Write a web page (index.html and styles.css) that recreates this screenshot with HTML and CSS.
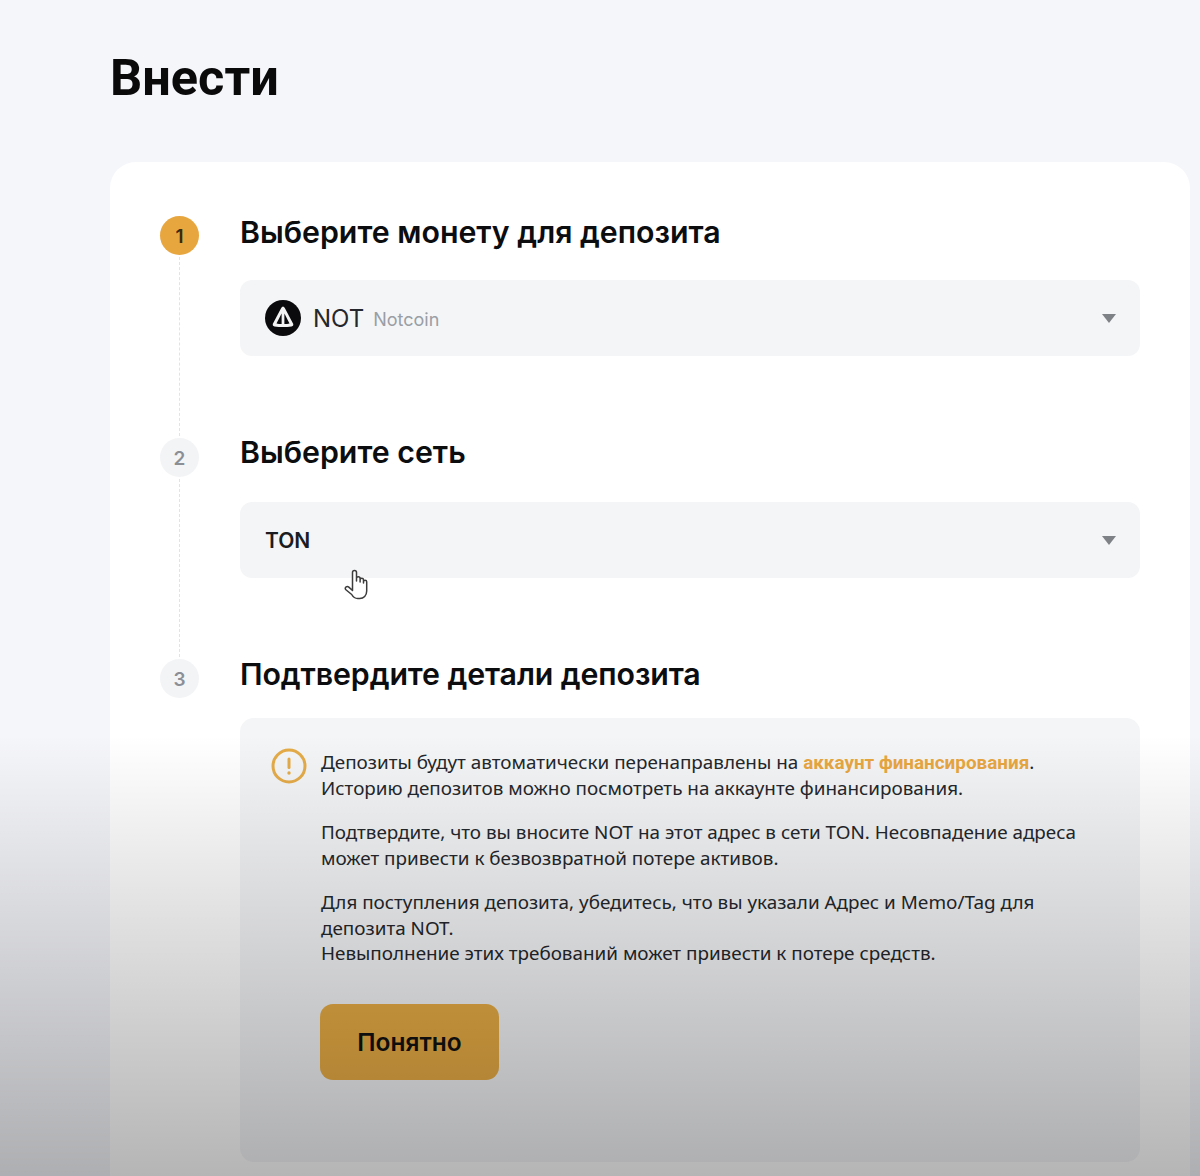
FILE: index.html
```html
<!DOCTYPE html>
<html lang="ru">
<head>
<meta charset="utf-8">
<title>Внести</title>
<link rel="stylesheet" href="styles.css">
</head>
<body>
<main class="page">
  <h1 class="title">Внести</h1>
  <section class="card">
    <div class="step">
      <div class="rail"><span class="num num-active">1</span><span class="dash"></span></div>
      <div class="step-body">
        <h2 class="step-title">Выберите монету для депозита</h2>
        <div class="select">
          <svg class="coin" viewBox="0 0 36 36" aria-hidden="true">
            <circle cx="18" cy="18" r="18" fill="#0b0b0d"/>
            <path d="M18 6.5 Q19 6.5 19.8 8 L28 23.5 Q29 26 26.5 26.4 Q18 27.6 9.5 26.4 Q7 26 8 23.5 L16.2 8 Q17 6.5 18 6.5 Z" fill="#f4f4f4"/>
            <path d="M16.6 13.5 L16.6 24 Q14 24 11.5 23.4 Z" fill="#0b0b0d"/>
            <path d="M19.4 13.5 L19.4 24 Q22 24 24.5 23.4 Z" fill="#0b0b0d"/>
          </svg>
          <span class="coin-code">NOT</span>
          <span class="coin-name">Notcoin</span>
          <span class="caret"></span>
        </div>
      </div>
    </div>
    <div class="step step-mid">
      <div class="rail"><span class="num">2</span><span class="dash"></span></div>
      <div class="step-body">
        <h2 class="step-title">Выберите сеть</h2>
        <div class="select">
          <span class="net">TON</span>
          <span class="caret"></span>
        </div>
      </div>
    </div>
    <div class="step step-last">
      <div class="rail"><span class="num">3</span></div>
      <div class="step-body">
        <h2 class="step-title">Подтвердите детали депозита</h2>
        <div class="notice">
          <svg class="warn" viewBox="0 0 36 36" aria-hidden="true">
            <circle cx="18" cy="18" r="16" fill="none" stroke="#e5ab48" stroke-width="3"/>
            <path d="M18 11 V19.5" stroke="#e5ab48" stroke-width="3" stroke-linecap="round"/>
            <circle cx="18" cy="25" r="1.7" fill="#e5ab48"/>
          </svg>
          <div class="notice-text">
            <p>Депозиты будут автоматически перенаправлены на <a class="link">аккаунт финансирования</a>.<br>Историю депозитов можно посмотреть на аккаунте финансирования.</p>
            <p>Подтвердите, что вы вносите NOT на этот адрес в сети TON. Несовпадение адреса может привести к безвозвратной потере активов.</p>
            <p>Для поступления депозита, убедитесь, что вы указали Адрес и Memo/Tag для депозита NOT.<br>Невыполнение этих требований может привести к потере средств.</p>
            <button class="ok">Понятно</button>
          </div>
        </div>
      </div>
    </div>
  </section>
</main>
<svg class="cursor" viewBox="0 0 24 32" aria-hidden="true">
  <path d="M8.5 18 V4.5 a2 2 0 0 1 4 0 V13 V10.6 a1.8 1.8 0 0 1 3.6 0 V14 V12 a1.7 1.7 0 0 1 3.4 0 V15 V13.8 a1.6 1.6 0 0 1 3.2 0 V23 c0 4.5 -3 7.5 -7 7.5 h-2 c-3 0 -4.6 -1.5 -6 -4 L1.6 21.5 c-1.2 -2.4 1.5 -4 3.2 -2.4 L8.5 22.5 Z" fill="#fff" stroke="#3c3c3c" stroke-width="1.5" stroke-linejoin="round"/>
</svg>
<div class="shade"></div>
</body>
</html>
```
FILE: styles.css
```css
* { box-sizing: border-box; }
html, body { margin: 0; }
body {
  height: 1176px;
  overflow: hidden;
  background: #f5f6fa;
  font-family: "Noto Sans", "Liberation Sans", sans-serif;
  color: #1e2329;
  position: relative;
}
.page { padding: 48px 10px 0 110px; }
.title {
  margin: 0 0 54px;
  font: 700 50.5px/60px Roboto, sans-serif;
  color: #0a0a0b;
}
.card {
  background: #fff;
  border-radius: 26px 26px 0 0;
  padding: 54px 50px 0;
  height: 1014px;
}
.step { display: flex; gap: 41px; }
.rail { width: 39px; flex: none; display: flex; flex-direction: column; align-items: center; }
.num {
  width: 39px; height: 39px; flex: none;
  border-radius: 50%;
  background: #f3f4f6;
  color: #8b8f95;
  display: flex; align-items: center; justify-content: center;
  font: 600 19px/1 Inter, sans-serif;
  padding-top: 2px;
}
.num-active { background: #e8a63f; color: #3a2a10; }
.dash { flex: 1; border-left: 1px dashed #e2e3e6; margin: 2px 0; }
.step-body { flex: 1; min-width: 0; padding-bottom: 82px; }
.step-mid .step-body { padding-bottom: 81px; }
.step-last .step-body { padding-bottom: 0; }
.step-title {
  margin: 0;
  height: 64px;
  font: 600 30.3px/32px Inter, sans-serif;
  color: #0c0d0f;
}
.step-mid .step-title { line-height: 28px; }
.step-last .step-title { height: 59px; line-height: 30px; letter-spacing: -.1px; }
.select {
  height: 76px;
  background: #f4f5f7;
  border-radius: 12px;
  padding: 0 25px;
  display: flex; align-items: center;
}
.coin { width: 36px; height: 36px; margin-right: 12px; flex: none; }
.coin-code { font: 400 24px/1 Inter, sans-serif; color: #24272c; margin-right: 9px; padding-top: 2px; }
.coin-name { font: 400 18px/1 Inter, sans-serif; color: #9a9ea5; padding-top: 3px; }
.net { font: 600 21px/1 Inter, sans-serif; color: #1a1c20; }
.caret {
  margin-left: auto;
  margin-right: -1px;
  width: 0; height: 0;
  border-left: 7px solid transparent;
  border-right: 7px solid transparent;
  border-top: 9px solid #7e8186;
}
.notice {
  background: #f4f5f7;
  border-radius: 14px;
  height: 444px;
  padding: 30px 30px 0 31px;
  display: flex;
  gap: 14px;
}
.warn { width: 36px; height: 36px; flex: none; }
.notice-text { font-size: 18.87px; line-height: 25.5px; color: #24272c; padding-top: 2px; }
.notice-text p { margin: 0 0 19px; }
.link { color: #e8a63f; font: 700 18.87px/25.5px Roboto, sans-serif; }
.ok {
  display: block;
  margin: 37px 0 0 -1px;
  width: 179px; height: 76px;
  border: 0;
  border-radius: 13px;
  padding: 2px 0 0;
  background: #e9ad45;
  color: #111;
  font: 600 24.5px/1 Inter, sans-serif;
}
.cursor {
  position: absolute;
  left: 344px; top: 568px;
  width: 24px; height: 32px;
}
.shade {
  position: absolute;
  left: 0; right: 0; top: 735px; bottom: 0;
  background: linear-gradient(to bottom, rgba(0,0,0,0), rgba(0,0,0,.29));
  pointer-events: none;
}
```
